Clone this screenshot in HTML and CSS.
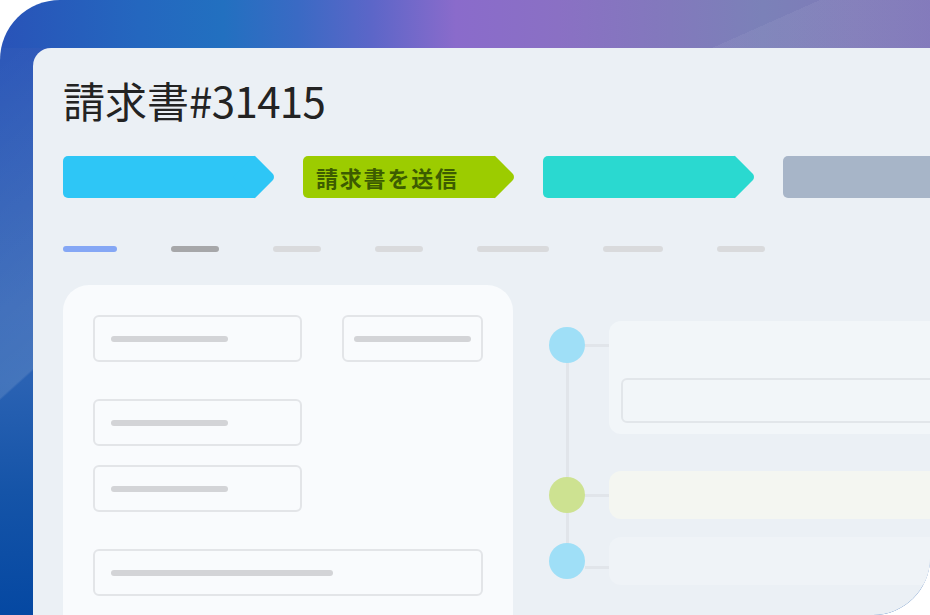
FILE: index.html
```html
<!DOCTYPE html>
<html lang="ja">
<head>
<meta charset="utf-8">
<title>請求書#31415</title>
<link rel="stylesheet" href="styles.css">
</head>
<body>
<div class="frame">
  <main class="card">
    <h1 class="title">請求書<span class="title-num">#31415</span></h1>

    <div class="steps">
      <div class="step step-blue"></div>
      <div class="step step-green"><span class="step-label">請求書を送信</span></div>
      <div class="step step-teal"></div>
      <div class="step step-gray"></div>
    </div>

    <div class="tabs">
      <span class="tab tab-active w54"></span>
      <span class="tab tab-hover w48"></span>
      <span class="tab w48"></span>
      <span class="tab w48"></span>
      <span class="tab w72"></span>
      <span class="tab w60"></span>
      <span class="tab w48"></span>
    </div>

    <div class="content">
      <section class="form-panel">
        <div class="form-row">
          <div class="field field-a"><span class="ph ph-117"></span></div>
          <div class="field field-b"><span class="ph ph-117"></span></div>
        </div>
        <div class="field field-a gap-lg"><span class="ph ph-117"></span></div>
        <div class="field field-a gap-sm"><span class="ph ph-117"></span></div>
        <div class="field field-full gap-lg"><span class="ph ph-222"></span></div>
      </section>

      <section class="timeline">
        <div class="tl-item">
          <span class="dot dot-blue"></span>
          <span class="link"></span>
          <div class="tl-card tl-card-main"><div class="tl-input"></div></div>
        </div>
        <div class="tl-item tl-gap-lg">
          <span class="dot dot-green"></span>
          <span class="link"></span>
          <div class="tl-card tl-card-green"></div>
        </div>
        <div class="tl-item tl-gap-sm">
          <span class="dot dot-blue"></span>
          <span class="link link-low"></span>
          <div class="tl-card tl-card-plain"></div>
        </div>
      </section>
    </div>
  </main>
</div>
</body>
</html>
```

FILE: styles.css
```css
* { box-sizing: border-box; }

html, body {
  margin: 0;
  background: #ffffff;
}

body {
  font-family: "Noto Sans CJK JP", "Noto Sans", sans-serif;
  width: 930px;
  height: 615px;
  overflow: hidden;
}

.frame {
  position: relative;
  width: 930px;
  height: 615px;
  padding: 48px 0 0 33px;
  border-radius: 60px 0 57px 0;
  overflow: hidden;
  background:
    linear-gradient(156deg, rgba(255,255,255,0) 0 79%, rgba(255,255,255,0.05) 79% 100%) 0 0 / 100% 48px no-repeat,
    linear-gradient(90deg, #2953b8 0%, #2467bf 15%, #2270c0 24%, #3a6ac4 32%, #5c66c8 40%, #8a6bcb 49%, #8a70c4 60%, #8279bc 72%, #7b81b8 82%, #7f7ab8 92%, #7d74b8 100%) 0 0 / 100% 48px no-repeat,
    linear-gradient(138deg, rgba(255,255,255,0) 0%, rgba(255,255,255,0.12) 27.4%, rgba(255,255,255,0) 27.6%),
    linear-gradient(180deg, #2953b8 0%, #2f62b5 50%, #2a62b3 62%, #1554a8 80%, #0548a2 100%);
}

.card {
  width: 1000px;
  background: #ebf0f5;
  border-top-left-radius: 18px;
  padding: 28px 0 0 30px;
  display: flex;
  flex-direction: column;
}

.title {
  margin: 0;
  font-size: 42px;
  font-weight: 400;
  line-height: 48px;
  color: #232323;
}

.title-num {
  letter-spacing: -0.6px;
}

/* Steps */
.steps {
  display: flex;
  gap: 48px;
  margin-top: 32px;
}

.step {
  position: relative;
  flex: none;
  width: 192px;
  height: 42px;
  border-radius: 5px 0 0 5px;
  display: flex;
  align-items: center;
  padding-left: 13px;
}

.step::after {
  content: "";
  position: absolute;
  top: 6.15px;
  right: -14.85px;
  width: 29.7px;
  height: 29.7px;
  background: inherit;
  border-radius: 0 5px 0 0;
  transform: rotate(45deg);
}

.step-blue { background: #2ec6f6; }
.step-green { background: #9ccc00; }
.step-teal { background: #2ad9d0; }
.step-gray { background: #a7b5c8; width: 260px; border-radius: 5px; }
.step-gray::after { display: none; }

.step-label {
  position: relative;
  z-index: 1;
  font-size: 22px;
  font-weight: 700;
  line-height: 26px;
  letter-spacing: 1.8px;
  color: #3c5c00;
  white-space: nowrap;
}

/* Tabs */
.tabs {
  display: flex;
  gap: 54px;
  margin-top: 48px;
}

.tab {
  flex: none;
  height: 6px;
  border-radius: 3px;
  background: #d9dadc;
}

.tab-active { background: #85a7f5; }
.tab-hover { background: #a6a7a9; }

.w48 { width: 48px; }
.w54 { width: 54px; }
.w60 { width: 60px; }
.w72 { width: 72px; }

/* Content */
.content {
  display: flex;
  gap: 36px;
  margin-top: 33px;
}

.form-panel {
  width: 450px;
  min-height: 360px;
  flex: none;
  background: #f9fbfd;
  border-radius: 26px 26px 0 0;
  padding: 30px;
  display: flex;
  flex-direction: column;
}

.form-row {
  display: flex;
  gap: 40px;
}

.field {
  flex: none;
  height: 47px;
  border: 2px solid #e3e5e8;
  border-radius: 6px;
  display: flex;
  align-items: center;
}

.field-a { width: 209px; padding-left: 16px; }
.field-b { width: 141px; justify-content: center; }
.field-full { width: 390px; padding-left: 16px; }

.gap-lg { margin-top: 37px; }
.gap-sm { margin-top: 19px; }

.ph {
  height: 6px;
  border-radius: 3px;
  background: #d3d4d7;
}

.ph-117 { width: 117px; }
.ph-222 { width: 222px; }

/* Timeline */
.timeline {
  position: relative;
  width: 420px;
  flex: none;
  padding-top: 36px;
}

.timeline::before {
  content: "";
  position: absolute;
  left: 16.5px;
  top: 60px;
  width: 3px;
  height: 216px;
  background: #e1e5ea;
}

.tl-item {
  display: flex;
  align-items: flex-start;
}

.tl-gap-lg { margin-top: 37px; }
.tl-gap-sm { margin-top: 18px; }

.dot {
  position: relative;
  z-index: 1;
  flex: none;
  width: 36px;
  height: 36px;
  border-radius: 50%;
  margin-top: 6px;
}

.dot-blue { background: #9fdff7; }
.dot-green { background: #cde291; }

.link {
  flex: none;
  width: 24px;
  height: 3px;
  margin-top: 22.5px;
  background: #e1e5ea;
}

.link-low { margin-top: 28.5px; }

.tl-card {
  flex: 1;
  height: 48px;
  border-radius: 12px;
}

.tl-card-main {
  height: 113px;
  background: #f2f6f9;
  padding: 57px 0 11px 12px;
}

.tl-card-green { background: #f4f6f1; }
.tl-card-plain { background: #eff3f7; }

.tl-input {
  height: 45px;
  border: 2px solid #e2e6ea;
  border-radius: 6px;
  background: #f2f6f9;
}
```
